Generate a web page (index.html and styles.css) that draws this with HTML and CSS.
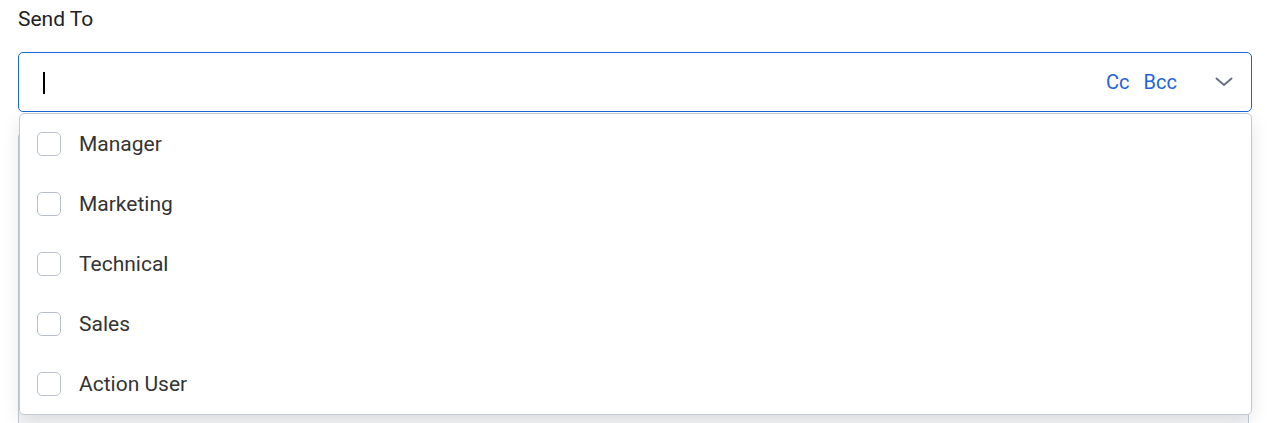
FILE: index.html
```html
<!DOCTYPE html>
<html>
<head>
<meta charset="utf-8">
<link rel="stylesheet" href="styles.css">
</head>
<body>
<div class="page">
  <div class="label">Send To</div>
  <div class="field">
    <div class="input">
      <span class="caret"></span>
      <div class="extras">
        <span class="link">Cc</span>
        <span class="link">Bcc</span>
      </div>
      <svg class="chev" width="18" height="10" viewBox="0 0 18 10"><path d="M1.5 1.5 L9 8 L16.5 1.5" fill="none" stroke="#6b7280" stroke-width="2" stroke-linecap="round" stroke-linejoin="round"/></svg>
    </div>
    <div class="menu">
      <div class="item"><span class="box"></span><span class="text">Manager</span></div>
      <div class="item"><span class="box"></span><span class="text">Marketing</span></div>
      <div class="item"><span class="box"></span><span class="text">Technical</span></div>
      <div class="item"><span class="box"></span><span class="text">Sales</span></div>
      <div class="item"><span class="box"></span><span class="text">Action User</span></div>
    </div>
  </div>
  <div class="under"></div>
</div>
</body>
</html>
```
FILE: styles.css
```css
html, body {
  margin: 0;
  padding: 0;
  background: #ffffff;
  height: 423px;
  overflow: hidden;
}
body {
  font-family: Roboto, "Liberation Sans", sans-serif;
  color: #222;
}
.page {
  padding: 7px 0 0 18px;
  width: 1234px;
}
.label {
  font-size: 21px;
  line-height: 24px;
  color: #222;
}
.field {
  position: relative;
  margin-top: 21px;
}
.input {
  box-sizing: border-box;
  height: 60px;
  border: 1px solid #1a66d9;
  border-radius: 5px;
  display: flex;
  align-items: center;
  padding: 0 18px 0 24px;
  background: #fff;
}
.caret {
  width: 2px;
  height: 22px;
  background: #000;
  margin-top: 1px;
}
.extras {
  margin-left: auto;
  display: flex;
  gap: 14px;
  font-size: 20px;
  color: #2563d9;
  margin-right: 38px;
}
.chev {
  display: block;
  margin-top: -1px;
}
.menu {
  position: absolute;
  left: 1px;
  top: 61px;
  width: 1233px;
  box-sizing: border-box;
  border: 1px solid #c3cad6;
  border-radius: 5px;
  background: #fff;
  box-shadow: 0 6px 18px rgba(0, 0, 0, 0.1);
  z-index: 2;
}
.item {
  height: 60px;
  display: flex;
  align-items: center;
  padding-left: 17px;
}
.box {
  box-sizing: border-box;
  width: 24px;
  height: 24px;
  border: 1px solid #b7bfcc;
  border-radius: 5px;
  background: #fff;
  margin-right: 18px;
}
.text {
  font-size: 21px;
  color: #333;
}
.under {
  margin-top: 20px;
  width: 1231px;
  height: 300px;
  box-sizing: border-box;
  border: 1px solid #c3cad6;
  border-radius: 5px;
  background: #f4f5f7;
}
```
